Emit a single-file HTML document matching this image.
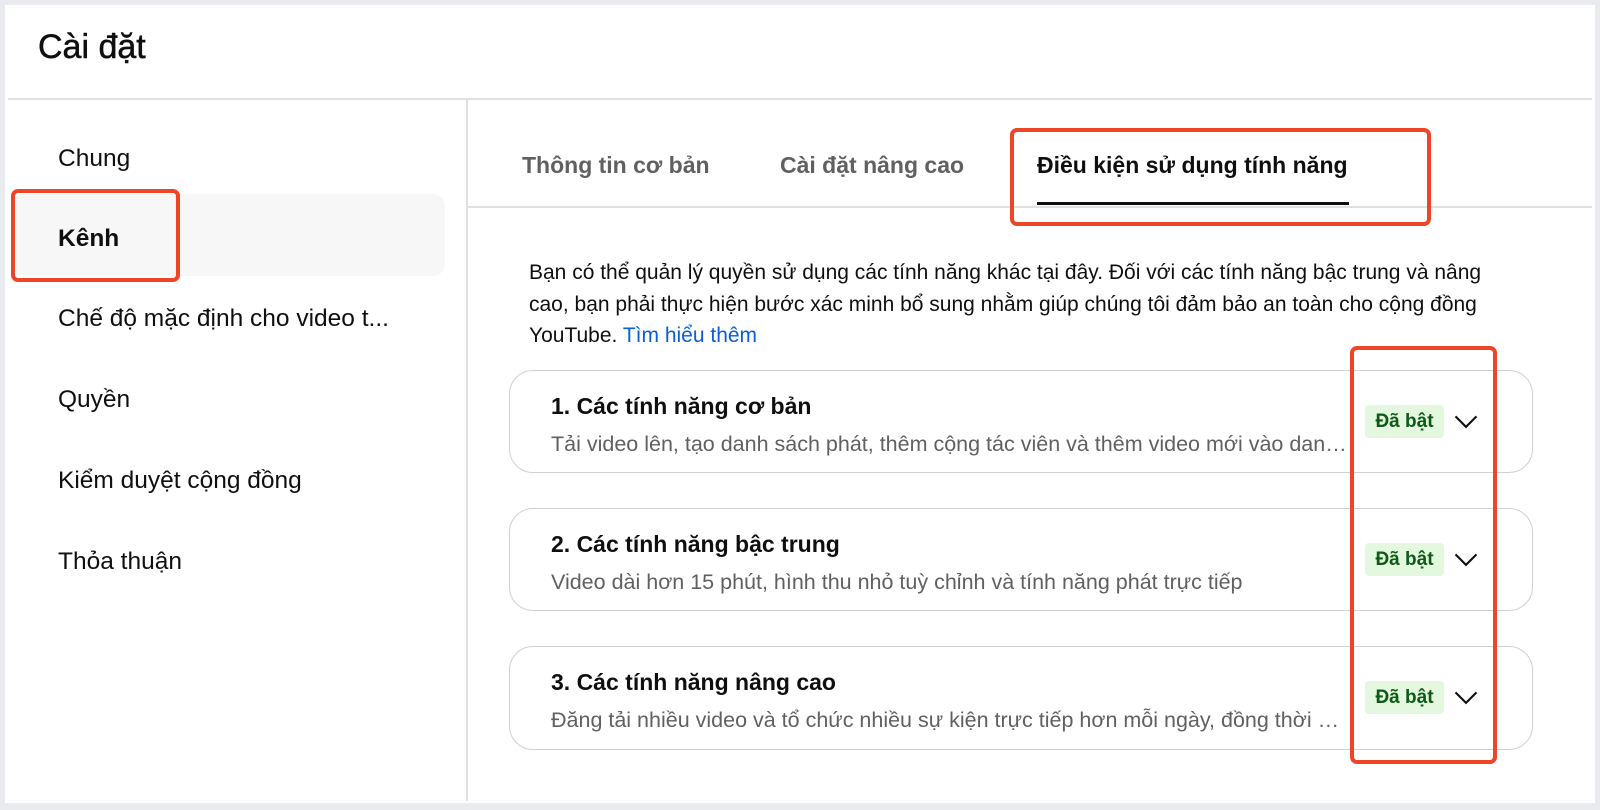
<!DOCTYPE html>
<html><head><meta charset="utf-8">
<style>
*{margin:0;padding:0;box-sizing:border-box}
body{width:1600px;height:810px;background:#e9ebee;font-family:"Liberation Sans",Arial,sans-serif;color:#0f0f0f;position:relative;overflow:hidden}
.panel{position:absolute;left:5px;top:5px;width:1590px;height:798px;background:#fff}
.a{position:absolute;white-space:nowrap}
.hl{position:absolute;background:#e0e0e0}
.side{font-size:24.5px;color:#0f0f0f}
.tab{font-size:23px;font-weight:bold;color:#606060}
.card{position:absolute;left:509px;width:1024px;border:1.5px solid #d0d0d0;border-radius:24px;background:#fff}
.ct{position:absolute;left:41px;top:22px;font-size:23px;font-weight:bold;color:#0f0f0f;white-space:nowrap}
.cs{position:absolute;left:41px;top:61px;font-size:21.5px;color:#606060;white-space:nowrap;overflow:hidden;text-overflow:ellipsis;max-width:800px}
.badge{position:absolute;left:855px;top:34px;width:79px;height:33px;background:#e3f8df;border-radius:4px;color:#0e5a16;font-size:19px;font-weight:bold;text-align:center;line-height:33px}
.chev{position:absolute;left:942px;top:36px}
.red{position:absolute;border:4px solid #ef4527;border-radius:7px}
</style></head><body>
<div class="panel"></div>
<div class="a" style="left:38px;top:28px;font-size:34px;color:#0f0f0f;-webkit-text-stroke:0.5px #0f0f0f">Cài đặt</div>
<div class="hl" style="left:8px;top:98px;width:1584px;height:2px"></div>
<div class="hl" style="left:466px;top:100px;width:2px;height:701px"></div>
<div style="position:absolute;left:12px;top:194px;width:433px;height:82px;background:#f7f7f7;border-radius:12px"></div>
<div class="a side" style="left:58px;top:145px">Chung</div>
<div class="a side" style="left:58px;top:225px;font-weight:bold">Kênh</div>
<div class="a side" style="left:58px;top:305px">Chế độ mặc định cho video t...</div>
<div class="a side" style="left:58px;top:386px">Quyền</div>
<div class="a side" style="left:58px;top:467px">Kiểm duyệt cộng đồng</div>
<div class="a side" style="left:58px;top:548px">Thỏa thuận</div>
<div class="red" style="left:11px;top:189px;width:169px;height:93px"></div>

<div class="a tab" style="left:522px;top:152px">Thông tin cơ bản</div>
<div class="a tab" style="left:780px;top:152px">Cài đặt nâng cao</div>
<div class="a tab" style="left:1037px;top:152px;color:#0f0f0f">Điều kiện sử dụng tính năng</div>
<div class="hl" style="left:468px;top:206px;width:1124px;height:1.5px"></div>
<div style="position:absolute;left:1037px;top:202px;width:312px;height:3px;background:#0f0f0f"></div>
<div class="red" style="left:1010px;top:128px;width:421px;height:98px"></div>

<div class="a" style="left:529px;top:257px;font-size:21px;line-height:31.6px;color:#0f0f0f">Bạn có thể quản lý quyền sử dụng các tính năng khác tại đây. Đối với các tính năng bậc trung và nâng<br>cao, bạn phải thực hiện bước xác minh bổ sung nhằm giúp chúng tôi đảm bảo an toàn cho cộng đồng<br>YouTube. <span style="color:#065fd4">Tìm hiểu thêm</span></div>

<div class="card" style="top:370px;height:103px">
<div class="ct">1. Các tính năng cơ bản</div>
<div class="cs">Tải video lên, tạo danh sách phát, thêm cộng tác viên và thêm video mới vào danh sách</div>
<div class="badge">Đã bật</div>
<svg class="chev" width="28" height="28" viewBox="0 0 24 24"><path d="M3 8l9 9 9-9" fill="none" stroke="#0f0f0f" stroke-width="1.8"/></svg>
</div>
<div class="card" style="top:508px;height:103px">
<div class="ct">2. Các tính năng bậc trung</div>
<div class="cs">Video dài hơn 15 phút, hình thu nhỏ tuỳ chỉnh và tính năng phát trực tiếp</div>
<div class="badge">Đã bật</div>
<svg class="chev" width="28" height="28" viewBox="0 0 24 24"><path d="M3 8l9 9 9-9" fill="none" stroke="#0f0f0f" stroke-width="1.8"/></svg>
</div>
<div class="card" style="top:646px;height:104px">
<div class="ct">3. Các tính năng nâng cao</div>
<div class="cs">Đăng tải nhiều video và tổ chức nhiều sự kiện trực tiếp hơn mỗi ngày, đồng thời đủ điều kiện</div>
<div class="badge">Đã bật</div>
<svg class="chev" width="28" height="28" viewBox="0 0 24 24"><path d="M3 8l9 9 9-9" fill="none" stroke="#0f0f0f" stroke-width="1.8"/></svg>
</div>
<div class="red" style="left:1350px;top:346px;width:147px;height:418px"></div>
</body></html>
